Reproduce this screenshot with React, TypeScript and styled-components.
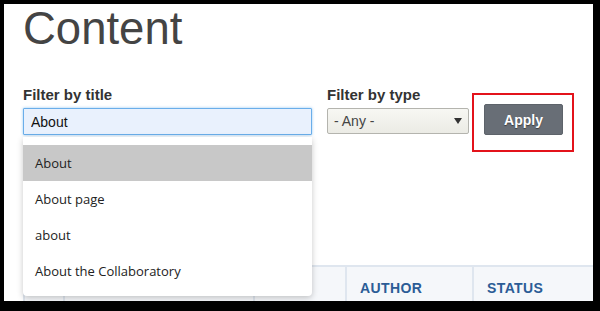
import React from 'react'
import styled, { createGlobalStyle } from 'styled-components'

const GlobalStyle = createGlobalStyle`
  html, body {
    margin: 0;
    padding: 0;
  }
  body {
    width: 600px;
    height: 311px;
    overflow: hidden;
    background: #000;
    font-family: "Liberation Sans", Arial, sans-serif;
  }
`

const Frame = styled.div`
  box-sizing: border-box;
  margin: 4px 7px 0 4px;
  height: 297px;
  padding: 2px 0 0 19px;
  background: #fff;
  overflow: hidden;
`

const Heading = styled.h1`
  margin: 0;
  font-size: 45.5px;
  line-height: 45px;
  font-weight: normal;
  color: #444;
`

const FilterRow = styled.div`
  display: flex;
  align-items: flex-start;
  margin-top: 35px;
`

const FieldGroup = styled.div<{ $width: number; $gap: number }>`
  position: relative;
  width: ${(p) => p.$width}px;
  margin-right: ${(p) => p.$gap}px;
`

const Label = styled.label`
  display: block;
  margin-bottom: 4px;
  font-size: 15px;
  line-height: 18px;
  font-weight: bold;
  color: #333;
`

const TextInput = styled.input`
  box-sizing: border-box;
  display: block;
  width: 100%;
  height: 27px;
  margin: 0;
  padding: 0 7px;
  border: 1px solid #6aaeea;
  border-radius: 1px;
  box-shadow: 0 0 3px rgba(102, 175, 233, 0.7);
  background: #e9f1fd;
  font-family: "Liberation Sans", Arial, sans-serif;
  font-size: 14px;
  color: #111;
  outline: none;
`

const SelectBox = styled.div`
  box-sizing: border-box;
  display: flex;
  align-items: center;
  justify-content: space-between;
  height: 26px;
  margin-top: 1px;
  padding: 0 6px 0 6px;
  border: 1px solid #b4b4ae;
  border-radius: 2px;
  background: linear-gradient(#f7f7f3, #ebebe5);
  font-size: 14px;
  color: #444;
`

const Caret = styled.span`
  width: 0;
  height: 0;
  border-left: 4px solid transparent;
  border-right: 4px solid transparent;
  border-top: 6px solid #333;
`

const Highlight = styled.div`
  box-sizing: border-box;
  margin-top: 7px;
  width: 102px;
  height: 59px;
  padding: 9px 0 0 10px;
  border: 2px solid #e3131b;
`

const ApplyButton = styled.button`
  box-sizing: border-box;
  width: 79px;
  height: 31px;
  border: 1px solid #5d636a;
  border-radius: 2px;
  background: #686e76;
  color: #fff;
  font-family: "Liberation Sans", Arial, sans-serif;
  font-size: 14px;
  font-weight: bold;
  text-shadow: 0 1px 1px rgba(0, 0, 0, 0.45);
  cursor: pointer;
`

const Suggestions = styled.ul`
  position: absolute;
  top: 51px;
  left: 0;
  right: 0;
  z-index: 2;
  margin: 0;
  padding: 8px 0 7px;
  list-style: none;
  background: #fff;
  border-radius: 0 0 4px 4px;
  box-shadow: 0 2px 6px rgba(0, 0, 0, 0.22);
`

const Suggestion = styled.li<{ $active?: boolean }>`
  display: flex;
  align-items: center;
  height: 36px;
  padding-left: 12px;
  background: ${(p) => (p.$active ? '#c8c8c8' : 'transparent')};
  font-family: "Open Sans", "Noto Sans", sans-serif;
  font-size: 13px;
  color: #222;
`

const TableHead = styled.div`
  display: grid;
  grid-template-columns: 40px 190px 92px 127px 1fr;
  margin-top: 113px;
  border-top: 2px solid #dfe6ef;
  background: #f5f7fa;
`

const HeadCell = styled.div`
  box-sizing: border-box;
  height: 40px;
  padding: 13px 0 0 13px;
  border-left: 2px solid #dfe6ef;
  font-size: 14px;
  line-height: 16px;
  font-weight: bold;
  letter-spacing: 0.4px;
  color: #2b5c96;
`

const suggestions = ['About', 'About page', 'about', 'About the Collaboratory']

export default function App() {
  return (
    <>
      <GlobalStyle />
      <Frame>
        <Heading>Content</Heading>
        <FilterRow>
          <FieldGroup $width={289} $gap={15}>
            <Label htmlFor="title">Filter by title</Label>
            <TextInput id="title" value="About" readOnly />
            <Suggestions>
              {suggestions.map((s, i) => (
                <Suggestion key={s} $active={i === 0}>
                  {s}
                </Suggestion>
              ))}
            </Suggestions>
          </FieldGroup>
          <FieldGroup $width={142} $gap={3}>
            <Label>Filter by type</Label>
            <SelectBox>
              <span>- Any -</span>
              <Caret />
            </SelectBox>
          </FieldGroup>
          <Highlight>
            <ApplyButton>Apply</ApplyButton>
          </Highlight>
        </FilterRow>
        <TableHead>
          <HeadCell />
          <HeadCell />
          <HeadCell />
          <HeadCell>AUTHOR</HeadCell>
          <HeadCell>STATUS</HeadCell>
        </TableHead>
      </Frame>
    </>
  )
}
